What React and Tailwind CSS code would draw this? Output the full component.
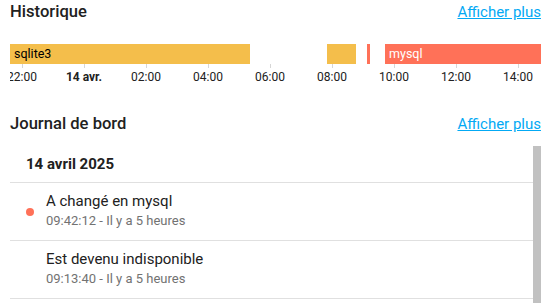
import React from "react";

const ticks = [
  { x: 22, label: "22:00" },
  { x: 84, label: "14 avr.", bold: true },
  { x: 146, label: "02:00" },
  { x: 208, label: "04:00" },
  { x: 270, label: "06:00" },
  { x: 332, label: "08:00" },
  { x: 394, label: "10:00" },
  { x: 456, label: "12:00" },
  { x: 518, label: "14:00" },
];

const segs = [
  { l: 10, r: 250, c: "#f4be4b", label: "sqlite3", dark: true },
  { l: 327, r: 356, c: "#f4be4b" },
  { l: 367, r: 370, c: "#ff7158" },
  { l: 385, r: 541, c: "#ff7158", label: "mysql" },
];

function Header({ title }) {
  return (
    <div className="flex items-center justify-between h-6">
      <span className="text-[16.6px] leading-6 font-medium text-[#212121]">{title}</span>
      <a className="text-[15px] leading-5 text-[#03a9f4] underline">Afficher plus</a>
    </div>
  );
}

function Row({ dot, title, sub }) {
  return (
    <div className="flex items-center border-b border-[#e0e0e0] h-[58px]">
      <div className="w-9 flex justify-center pl-[4px]">
        {dot && <span className="w-2 h-2 rounded-full bg-[#ff7158] mt-[1px]" />}
      </div>
      <div className="flex flex-col pb-[3px]">
        <span className="text-[15px] leading-5 text-[#212121]">{title}</span>
        <span className="text-[13px] leading-4 mt-[2px] text-[#727272]">{sub}</span>
      </div>
    </div>
  );
}

export default function App() {
  return (
    <div
      className="w-[558px] h-[303px] overflow-hidden bg-white pl-[10px] pr-[17px]"
      style={{ fontFamily: "Roboto, 'Liberation Sans', sans-serif" }}
    >
      <Header title="Historique" />
      <div className="relative h-[68px] mt-[20px] -ml-[10px] -mr-[17px]">
        {segs.map((s, i) => (
          <div
            key={i}
            className="absolute top-0 h-5 flex items-center overflow-hidden"
            style={{ left: s.l, width: s.r - s.l, background: s.c }}
          >
            {s.label && (
              <span className={`pl-1 text-[12.5px] ${s.dark ? "text-black" : "text-white"}`}>{s.label}</span>
            )}
          </div>
        ))}
        <div className="absolute left-[10px] right-[17px] top-[20px] h-[24px] overflow-hidden">
          {ticks.map((t) => (
            <React.Fragment key={t.label}>
              <div className="absolute top-0 h-[4px] w-px bg-[#d6d6d6]" style={{ left: t.x - 10 }} />
              <span
                className={`absolute top-[5px] text-[12px] leading-4 -translate-x-1/2 text-[#212121] ${t.bold ? "font-bold" : ""}`}
                style={{ left: t.x - 10 }}
              >
                {t.label}
              </span>
            </React.Fragment>
          ))}
        </div>
      </div>
      <Header title="Journal de bord" />
      <div className="mt-[10px] flex">
        <div className="flex-1 flex flex-col">
          <div className="pl-4 pt-[6px] pb-[10px] border-b border-[#e0e0e0] h-[37px]">
            <span className="text-[15px] leading-5 font-bold text-[#212121]">14 avril 2025</span>
          </div>
          <Row dot title="A changé en mysql" sub="09:42:12 - Il y a 5 heures" />
          <Row title="Est devenu indisponible" sub="09:13:40 - Il y a 5 heures" />
        </div>
        <div className="w-[8px] bg-[#c1c1c1] h-[200px]" />
      </div>
    </div>
  );
}
